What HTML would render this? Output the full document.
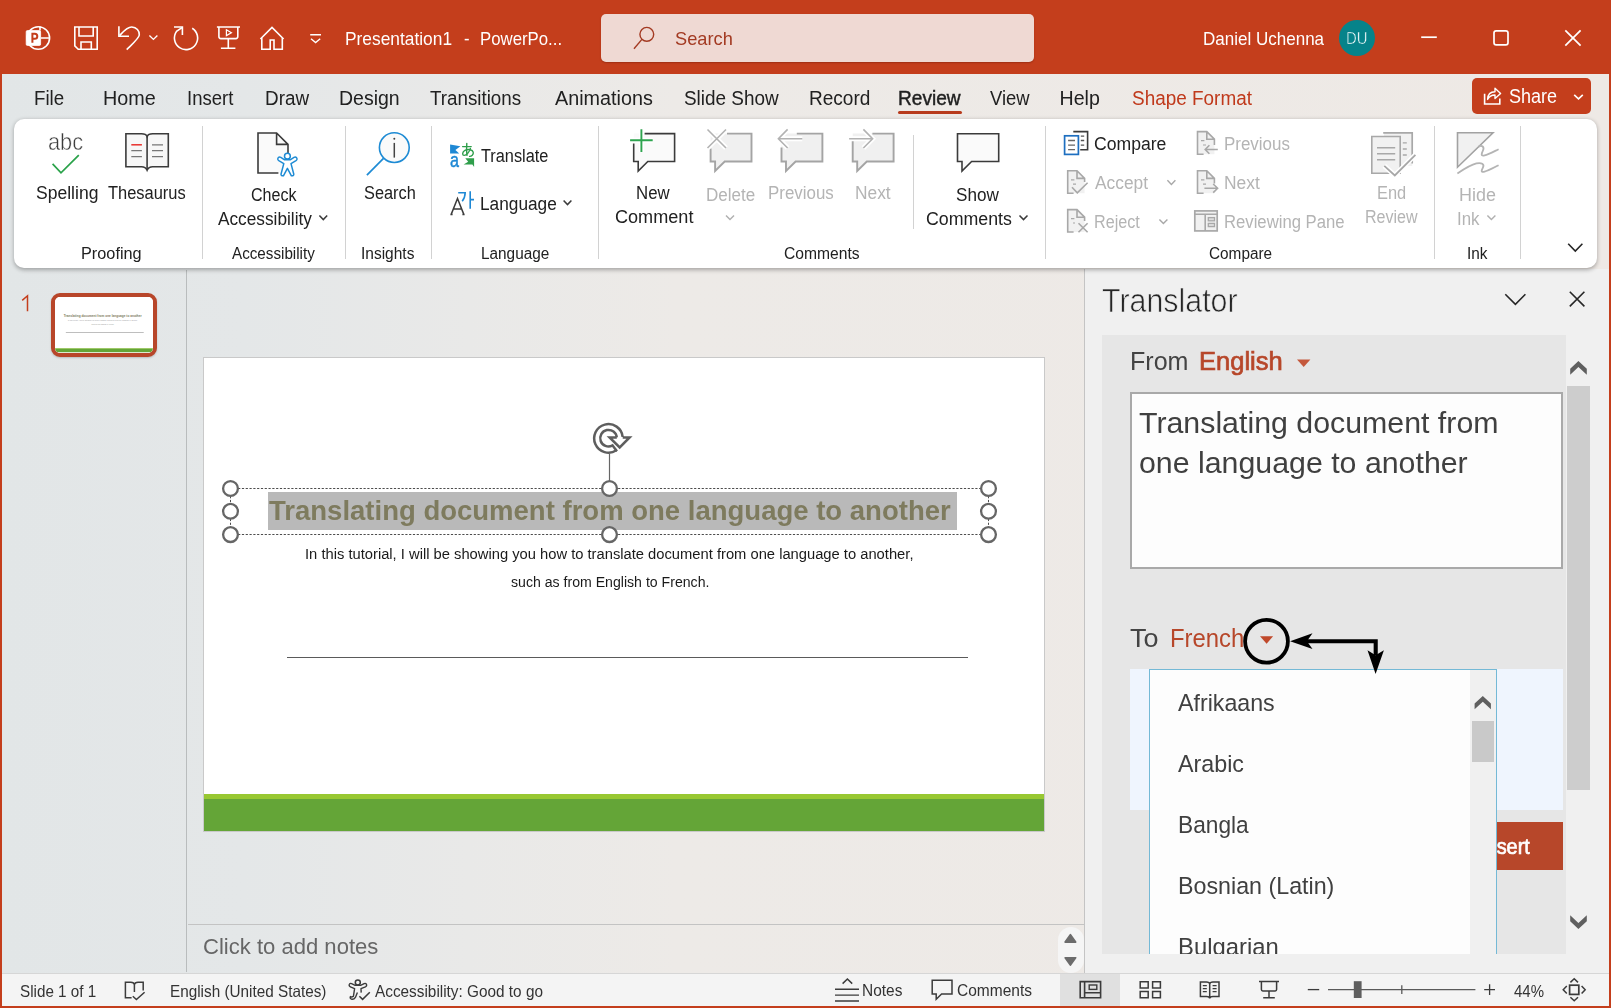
<!DOCTYPE html>
<html lang="en"><head><meta charset="utf-8"><title>Presentation1 - PowerPoint</title>
<style>
html,body{margin:0;padding:0;}
body{width:1611px;height:1008px;overflow:hidden;position:relative;background:#c43e1c;font-family:"Liberation Sans",sans-serif;}
.a{position:absolute;box-sizing:border-box;}
.t{position:absolute;white-space:nowrap;line-height:1;transform-origin:0 0;font-family:"Liberation Sans",sans-serif;}
#gfx{position:absolute;left:0;top:0;width:1611px;height:1008px;}
#app{left:2px;top:74px;width:1607px;height:932px;background:linear-gradient(90deg,#e2e6e7 0%,#e4e7e8 15%,#e9e9e8 29%,#edeae7 42%,#eee9e5 100%);}
#ribbon{left:14px;top:119px;width:1583px;height:149px;background:#fff;border-radius:10px;box-shadow:0 1.5px 4px rgba(0,0,0,.30);}
#search{left:601px;top:14px;width:433px;height:48px;background:#efd9d3;border-radius:5px;box-shadow:0 1px 1.5px rgba(90,20,0,.35);}
#share{left:1472px;top:78px;width:119px;height:36px;background:#c43e1c;border-radius:5px;}
#avatar{left:1339px;top:19.7px;width:36.2px;height:36.2px;border-radius:50%;background:#06838a;}
#revline{left:898px;top:111px;width:64px;height:3px;border-radius:2px;background:#b83b1d;}
.vsep{width:1px;background:#d2d2d2;top:126px;height:133px;}
#thumbsep{left:186px;top:270px;width:1px;height:702px;background:#b9bcbd;}
#thumb{left:51px;top:293px;width:106px;height:64px;border:4px solid #b8462a;box-shadow:0 1px 2px rgba(0,0,0,.18);border-radius:9px;background:#fff;overflow:hidden;}
#slide{left:203px;top:357px;width:842px;height:475px;background:#fff;border:1px solid #c9c9c9;}
#green1{left:204px;top:794px;width:840px;height:5px;background:#98c832;}
#green2{left:204px;top:799px;width:840px;height:32px;background:#64a537;}
#hl{left:268px;top:492px;width:689px;height:38px;background:#b9b9b9;}
#sline{left:287px;top:657px;width:681px;height:1px;background:#5a5a5a;}
#notesline{left:188px;top:924px;width:896px;height:1px;background:#c3c3c3;}
#notescroll{left:1058px;top:927px;width:26px;height:46px;border-radius:13px;background:#f5f5f5;}
#pane{left:1084px;top:269px;width:525px;height:704px;background:#f0f0f0;border-left:1px solid #c4c4c4;}
#pinner{left:1102px;top:335px;width:464px;height:619px;background:#e6e6e6;}
#ptrack{left:1567px;top:386px;width:23px;height:404px;background:#cdcdcd;}
#ptext{left:1130px;top:392px;width:433px;height:177px;background:#fdfdfd;border:2px solid #a9a9a9;}
#pblue{left:1130px;top:669px;width:433px;height:141px;background:#eff5fe;}
#pins{left:1400px;top:822px;width:163px;height:48px;background:#b7472a;}
#ddl{left:1149px;top:669px;width:348px;height:285px;background:#fdfdfd;border:1px solid #74b9d6;border-bottom:none;}
#ddtrack{left:1470px;top:670px;width:26px;height:284px;background:#f0f0f0;}
#ddthumb{left:1472px;top:721px;width:22px;height:41px;background:#c9c9c9;}
#status{left:2px;top:973px;width:1607px;height:33px;background:#f4f4f4;border-top:1px solid #d6d6d6;}
#viewsel{left:1060px;top:974px;width:60px;height:32px;background:#e0e0e0;}

#txt{position:absolute;left:0;top:0;width:1611px;height:1008px;will-change:opacity;opacity:.999;}
#mini{position:absolute;left:55px;top:297px;width:98px;height:56px;overflow:hidden;border-radius:5px;background:#fff;}
#mini-in{position:absolute;left:-22.4px;top:-39.25px;width:1200px;height:900px;transform:scale(0.1144,0.1134);transform-origin:0 0;}
#mini-in .t:nth-child(n+2){opacity:.5;}

</style></head>
<body>
<div class="a" id="app"></div>
<div class="a" id="search"></div>
<div class="a" id="avatar"></div>
<div class="a" id="share"></div>
<div class="a" id="revline"></div>
<div class="a" id="thumbsep"></div>
<div class="a" id="thumb"></div><div id="mini"><div id="mini-in"><span class="t" style="left:268.8px;top:497.4px;font-size:28px;color:#7e7b5e;font-weight:700;transform:scaleX(0.9825);">Translating document from one language to another</span><span class="t" style="left:305.2px;top:546.6px;font-size:14px;color:#1a1a1a;transform:scaleX(1.0523);">In this tutorial, I will be showing you how to translate document from one language to another,</span><span class="t" style="left:510.5px;top:575.4px;font-size:14px;color:#1a1a1a;transform:scaleX(1.0078);">such as from English to French.</span><div class="a" style="left:287px;top:655px;width:681px;height:4px;background:#707070"></div><div class="a" style="left:180px;top:794px;width:890px;height:5px;background:#98c832"></div><div class="a" style="left:180px;top:799px;width:890px;height:32px;background:#64a537"></div></div></div>
<div class="a" id="slide"></div>
<div class="a" id="green1"></div>
<div class="a" id="green2"></div>
<div class="a" id="hl"></div>
<div class="a" id="sline"></div>
<div class="a" id="notesline"></div>
<div class="a" id="notescroll"></div>
<div class="a" id="pane"></div>
<div class="a" id="pinner"></div>
<div class="a" id="ptrack"></div>
<div class="a" id="ptext"></div>
<div class="a" id="pblue"></div>
<div class="a" id="pins"></div>
<div class="a" id="ddl"></div>
<div class="a" id="ddtrack"></div>
<div class="a" id="ddthumb"></div>
<div class="a" id="ribbon"></div>
<div class="a vsep" style="left:202px"></div>
<div class="a vsep" style="left:345px"></div>
<div class="a vsep" style="left:431px"></div>
<div class="a vsep" style="left:598px"></div>
<div class="a vsep" style="left:913px;top:135px;height:94px"></div>
<div class="a vsep" style="left:1045px"></div>
<div class="a vsep" style="left:1434px"></div>
<div class="a vsep" style="left:1520px"></div>
<div class="a" id="status"></div>
<div class="a" id="viewsel"></div>

<svg id="gfx" viewBox="0 0 1611 1008" width="1611" height="1008" fill="none" stroke-linecap="butt" stroke-linejoin="miter">
<!--TITLEBAR-->
<g stroke="#fff" stroke-width="1.6">
<!-- ppt logo -->
<circle cx="38.3" cy="38" r="11.3"/>
<path d="M40 26.6V30.6 M41 38H49.6"/>
<rect x="26.2" y="30.6" width="14.4" height="14.8" rx="1.2" fill="#fff" stroke="#fff" stroke-width="0.8"/>
<path d="M32.4 42.8V33.8H34.8a2.4 2.4 0 0 1 0 5H32.4" stroke="#c43e1c" stroke-width="2"/>
<!-- save -->
<path d="M74.8 27H97.2V49.3H78.2L74.8 45.9Z"/>
<path d="M79 27V36H93.2V27 M81 49.3V42H91.3V49.3"/>
<!-- undo -->
<path d="M118.9 26.2V36.3H129"/>
<path d="M119.6 35.6C123 32 127 26.8 131.8 27 C136.5 27.2 139.6 30.8 139.3 35 C139 38 136 40.5 126.7 49.6"/>
<path d="M149.4 35.6L153.4 39.4L157.4 35.6" stroke-width="1.4"/>
<!-- redo -->
<path d="M174 27H182.4V35"/>
<path d="M182 27.6L176.5 31.4A11.6 11.6 0 1 0 192.2 28.2"/>
<!-- present -->
<path d="M216.9 27H240 M218.9 27V36.6a2 2 0 0 0 2 2H235.8a2 2 0 0 0 2-2V27 M228.3 38.6V48.2 M220.9 48.2H235.4"/>
<path d="M226.4 29.8L231.4 32.7L226.4 35.6Z" stroke-width="1.2"/>
<!-- home -->
<path d="M260.4 39L272 27.4L283.6 39 M261.8 38V49.2H270.2V40H274V49.2H282.3V38"/>
<!-- customize -->
<path d="M310.2 34.8H321 M311 38.8L315.6 42.6L320.2 38.8" stroke-width="1.4"/>
<!-- window buttons -->
<path d="M1421.2 37.2H1436.8" stroke-width="1.7"/>
<rect x="1494" y="30.9" width="14" height="14" rx="2.2" stroke-width="1.7"/>
<path d="M1565.3 30.4L1580.6 45.7 M1580.6 30.4L1565.3 45.7" stroke-width="1.7"/>
<!-- share icon -->
<path d="M1484.6 93.8V104H1499.8V98.6"/>
<path d="M1487.6 99.4C1487.8 94.6 1490.6 91.8 1495 91.8V88.2L1500.6 93.4L1495 98.6V95C1491.6 95 1489.2 96.4 1487.6 99.4Z" stroke-width="1.4" stroke-linejoin="round"/>
<path d="M1574.2 94.8L1578.5 98.8L1582.8 94.8" stroke-width="1.6"/>
</g>
<!-- search glass -->
<g stroke="#a33a22" stroke-width="1.4"><circle cx="646.8" cy="34.3" r="6.9"/><path d="M641.9 39.4L634 48.7"/></g>

<!--RIBBON-->
<g stroke-width="1.6">
<!-- spelling check -->
<path d="M52.6 163.8L61 172.8L78.8 155.2" stroke="#2aa24a" stroke-width="1.7"/>
<!-- thesaurus book -->
<path d="M125.9 133.8H141.5Q146 133.8 147.1 136.6Q148.2 133.8 152.7 133.8H168.3V166.8H152.7Q148.6 166.8 147.1 170.2Q145.6 166.8 141.5 166.8H125.9Z" fill="#f7f7f7" stroke="#3b3b3b"/>
<path d="M147.1 136.6V170" stroke="#3b3b3b"/>
<path d="M131.3 144.8H141.9" stroke="#e8302c" stroke-width="1.5"/>
<path d="M131.3 150.7H141.9 M131.3 156.6H141.9 M152 144.8H163 M152 150.7H163 M152 156.6H163" stroke="#777" stroke-width="1.3"/>
<!-- check accessibility -->
<path d="M258 133H276.6L288 144.4V173H258Z" fill="#fafafa" stroke="none"/>
<path d="M288 153V144.4L276.6 133H258V173H278.4 M276.6 133V144.4H288" stroke="#3b3b3b"/>
<g stroke="#1e8bd4" stroke-width="1.5" fill="#fff" stroke-linejoin="round">
<path d="M278.3 157.6Q277 159.4 278.8 160.6L283.8 163.6L281 174.2Q281.2 176.2 283.4 175.8L287.4 168.4L291.4 175.8Q293.6 176.2 293.8 174.2L291 163.6L296 160.6Q297.8 159.4 296.5 157.6Q295.4 156.6 294 157.4L290.2 159.8H284.6L280.8 157.4Q279.4 156.6 278.3 157.6Z"/>
<circle cx="287.4" cy="156.2" r="2.9"/>
</g>
<path d="M319.4 215.4L323.3 219.6L327.2 215.4" stroke="#3b3b3b" stroke-width="1.5"/>
<!-- insights search -->
<circle cx="394.3" cy="147.6" r="14.9" stroke="#1e8bd4" fill="#fafafa"/>
<path d="M383.5 158.4L366.9 175.2" stroke="#1e8bd4" stroke-width="1.7"/>
<path d="M394.3 142.9V157.6" stroke="#444" stroke-width="1.5"/>
<circle cx="394.3" cy="138.8" r="1" fill="#444" stroke="none"/>
<!-- translate -->
<path d="M450.1 144.6L460.4 146.3L455.4 150L459.2 153.4H450.1Z" fill="#1e88d4" stroke="none"/>
<path d="M465.3 158.2H474.1V167L472.4 164.6L463.6 164.4L468.2 161.8Z" fill="#2f9e4b" stroke="none"/>
<g stroke="#2f9e4b" stroke-width="1.4" stroke-linecap="round">
<path d="M462.6 146.6H471.2 M466.8 143.4Q466.2 150 467 155.4"/>
<path d="M470.4 148.4C469.4 152 466.4 155.6 464 155.4C462 155 462.2 151.8 465 150.4C468.2 148.8 472.6 149.6 473.2 152.2C473.8 154.8 471.4 156.2 469.6 156.4"/>
</g>
<!-- language -->
<path d="M451.2 214.4L457.5 198.5L463.8 214.4 M453.4 209H461.6 M450.4 214.4H452.6 M462.4 214.4H464.6" stroke="#3b3b3b" stroke-width="1.5"/>
<path d="M458.2 192.8H465.2Q465 198 462.2 201.2 M470.2 191.2V208.8 M470.2 199.6H474" stroke="#1e88d4" stroke-width="1.6"/>
<path d="M563.6 200.4L567.5 204.6L571.4 200.4" stroke="#3b3b3b" stroke-width="1.5"/>
<!-- new comment -->
<path d="M633.7 133.6H674.6V161.5H647.8L638.2 171V161.5H633.7Z" fill="#fafafa" stroke="none"/>
<path d="M644.6 133.6H674.6V161.5H647.8L638.2 171V161.5H633.7V143.6" stroke="#3b3b3b"/>
<path d="M630.1 140.3H652.7 M641.4 129.3V151.9" stroke="#fff" stroke-width="5"/>
<path d="M630.1 140.3H652.7 M641.4 129.3V151.9" stroke="#2ea44f" stroke-width="1.9"/>
<!-- delete comment -->
<path d="M710.6 133.6H751.5V161.5H724.7L715.1 171V161.5H710.6Z" fill="#f0f0f0" stroke="none"/>
<path d="M727 133.6H751.5V161.5H724.7L715.1 171V161.5H710.6V148.6" stroke="#a4a4a4" stroke-width="1.9"/>
<path d="M707.5 129.5L726 148 M726 129.5L707.5 148" stroke="#fff" stroke-width="5"/>
<path d="M707.5 129.5L726 148 M726 129.5L707.5 148" stroke="#b2b2b2" stroke-width="1.6"/>
<path d="M726 215.4L730 219.6L734 215.4" stroke="#b0b0b0" stroke-width="1.4"/>
<!-- previous comment -->
<path d="M781.5 133.6H822.4V161.5H795.6L786 171V161.5H781.5Z" fill="#f0f0f0" stroke="none"/>
<path d="M796.8 133.6H822.4V161.5H795.6L786 171V161.5H781.5V147.4" stroke="#a4a4a4" stroke-width="1.9"/>
<path d="M802.3 138.7H778.8 M787.6 129.4L778.4 138.7L787.6 148" stroke="#fff" stroke-width="5"/>
<path d="M802.3 138.7H778.8 M787.6 129.4L778.4 138.7L787.6 148" stroke="#b2b2b2" stroke-width="1.6"/>
<!-- next comment -->
<path d="M852.7 133.6H893.6V161.5H866.8L857.2 171V161.5H852.7Z" fill="#f0f0f0" stroke="none"/>
<path d="M872.4 133.6H893.6V161.5H866.8L857.2 171V161.5H852.7V141" stroke="#a4a4a4" stroke-width="1.9"/>
<path d="M849.1 138.7H872.4 M863.4 129.4L872.6 138.7L863.4 148" stroke="#fff" stroke-width="5"/>
<path d="M849.1 138.7H872.4 M863.4 129.4L872.6 138.7L863.4 148" stroke="#b2b2b2" stroke-width="1.6"/>
<!-- show comments -->
<path d="M957.5 133.8H998.7V161.5H971.6L962 171V161.5H957.5Z" fill="#fafafa" stroke="#3b3b3b"/>
<path d="M1019.5 215.4L1023.5 219.6L1027.5 215.4" stroke="#3b3b3b" stroke-width="1.5"/>
<!-- compare -->
<path d="M1073.3 131.6H1087.6V149.8H1080.2" stroke="#3b3b3b"/>
<path d="M1080.8 136.1H1084.2 M1080.8 140.5H1084.2 M1080.8 145.1H1084.2" stroke="#555" stroke-width="1.3"/>
<rect x="1064.6" y="135.8" width="13.8" height="18.6" fill="#fff" stroke="#1e6fc0" stroke-width="1.7"/>
<path d="M1068.1 140.5H1075 M1068.1 145.1H1075 M1068.1 149.6H1075" stroke="#666" stroke-width="1.3"/>
<!-- accept -->
<g stroke="#a8a8a8">
<path d="M1067.7 170.8H1077L1084.6 178.4V193.2H1067.7Z" fill="#f1f1f1" stroke="none"/>
<path d="M1084.6 182V178.4L1077 170.8H1067.7V193.2H1073.6 M1077 170.8V178.4H1084.6"/>
<path d="M1071 179.8H1074.4 M1073 184.2H1076" stroke-width="1.2"/>
<path d="M1072 187.3L1077.3 192.8L1087.6 182.7"/>
<path d="M1167.4 180.3L1171.4 184.5L1175.4 180.3" stroke-width="1.4"/>
<!-- reject -->
<path d="M1067.7 209.6H1077L1084.6 217.2V232H1067.7Z" fill="#f1f1f1" stroke="none"/>
<path d="M1084.6 221V217.2L1077 209.6H1067.7V232H1073.6 M1077 209.6V217.2H1084.6"/>
<path d="M1071 218.6H1074.4 M1073 223H1075" stroke-width="1.2"/>
<path d="M1078.5 223.2L1087.6 232.3 M1087.6 223.2L1078.5 232.3"/>
<path d="M1159.4 219.4L1163.4 223.6L1167.4 219.4" stroke-width="1.4"/>
<!-- previous change -->
<path d="M1197.5 131.6H1206.8L1214.4 139.2V154.2H1197.5Z" fill="#f1f1f1" stroke="none"/>
<path d="M1214.4 145V139.2L1206.8 131.6H1197.5V154.2H1203.6 M1206.8 131.6V139.2H1214.4"/>
<path d="M1201 140.6H1204.4 M1203 145H1206" stroke-width="1.2"/>
<path d="M1217.8 149.5H1205.4 M1209.4 145.3L1205.2 149.5L1209.4 153.7"/>
<!-- next change -->
<path d="M1197.5 170.8H1206.8L1214.4 178.4V193.2H1197.5Z" fill="#f1f1f1" stroke="none"/>
<path d="M1214.4 183.6V178.4L1206.8 170.8H1197.5V193.2H1203.6 M1206.8 170.8V178.4H1214.4"/>
<path d="M1201 179.8H1204.4 M1203 184.2H1206" stroke-width="1.2"/>
<path d="M1204.4 188.3H1217.4 M1213.2 184L1217.6 188.3L1213.2 192.6"/>
<!-- reviewing pane -->
<rect x="1194.8" y="210.9" width="22.4" height="20" fill="#f1f1f1" stroke-width="1.7"/>
<path d="M1194.8 214.2H1217.2 M1205.2 214.2V230.9"/>
<rect x="1208.3" y="217.6" width="6.2" height="3.2" fill="#ddd" stroke-width="1.3"/>
<rect x="1208.3" y="223.4" width="6.2" height="3.2" fill="#ddd" stroke-width="1.3"/>
<!-- end review -->
<path d="M1384 132.8H1412.2V166H1384Z" fill="#f1f1f1" stroke="none"/>
<path d="M1383.2 132.8H1412.2V163.6" fill="none" stroke-width="1.7"/>
<path d="M1371.8 136.5H1400.2V173.2H1371.8Z" fill="#f1f1f1"/>
<path d="M1377 147.7H1395.2 M1377 153.7H1395.2 M1377 159.8H1395.2 M1402.8 142.9H1406.8 M1402.8 149H1406.8 M1402.8 155H1406.8" stroke-width="1.4"/>
<path d="M1384.3 165.8L1394.8 175.4L1415.4 154.8" stroke="#fff" stroke-width="5"/>
<path d="M1384.3 165.8L1394.8 175.4L1415.4 154.8" stroke-width="1.8"/>
<!-- hide ink -->
<path d="M1457.5 132.8H1493L1457.5 167.2Z" fill="#f1f1f1" stroke="#a2a2a2" stroke-width="1.6"/>
<path d="M1478.6 146.6C1482 144.6 1484.6 147 1483 150.4C1481.4 153.8 1480.6 156.4 1484.6 155.4C1488.6 154.4 1494 151.4 1498.6 149.2" stroke="#b4b4b4" stroke-width="1.8"/>
<path d="M1457.4 173.4C1464 169 1470.4 164.8 1476.4 163.4C1481.6 162.2 1484.6 164.2 1483 167.4C1481.4 170.6 1480.6 172.6 1484.6 171.6C1488.6 170.6 1494 167.4 1498.6 165.2" stroke="#b4b4b4" stroke-width="1.8"/>
<path d="M1487.4 215.4L1491.4 219.6L1495.4 215.4" stroke-width="1.4" stroke="#b0b0b0"/>
</g>
<!-- collapse ribbon -->
<path d="M1568.2 243.8L1575.3 251L1582.4 243.8" stroke="#262626" stroke-width="1.6"/>
</g>

<!--SLIDE-->
<path d="M22.2 300.4L27.5 295.8V311.2" stroke="#c43e1c" stroke-width="1.5"/>
<!-- selection -->
<g stroke="#4d4d4d" stroke-width="1">
<path d="M230.5 488.5H988.5 M230.5 534.5H988.5" stroke-dasharray="2.2 1.6"/>
<path d="M230.5 488.5V534.5 M988.5 488.5V534.5" stroke-dasharray="2.2 1.6"/>
<path d="M609.5 453.5V481" stroke="#666" stroke-width="1.2"/>
</g>
<g fill="#fff" stroke="#666" stroke-width="2.3">
<circle cx="230.5" cy="488.5" r="7.4"/><circle cx="230.5" cy="511.3" r="7.4"/><circle cx="230.5" cy="534.6" r="7.4"/>
<circle cx="609.5" cy="488.5" r="7.4"/><circle cx="609.5" cy="534.6" r="7.4"/>
<circle cx="988.5" cy="488.5" r="7.4"/><circle cx="988.5" cy="511.3" r="7.4"/><circle cx="988.5" cy="534.6" r="7.4"/>
</g>
<!-- rotate handle -->
<g stroke="#5e5e5e" stroke-width="2.5" stroke-linejoin="miter">
<path d="M622.7 437A14.3 14.3 0 1 0 616.4 450.3"/>
<path d="M616.8 437.6A8.3 8.3 0 1 0 612.3 445.6"/>
<path d="M611.8 444.6L617 451.2"/>
<path d="M616.8 437.4H609.6L619.7 447.4L629.6 437.4H622.7" fill="#fff"/>
</g>

<!--PANE-->
<g>
<path d="M1505.3 294.3L1515.4 304.4L1525.4 294.3" stroke="#262626" stroke-width="1.6"/>
<path d="M1569.8 291.8L1584.4 306.4 M1584.4 291.8L1569.8 306.4" stroke="#262626" stroke-width="1.6"/>
<path d="M1578.4 361L1586.8 368.7V374.7L1578.4 366.9L1570.2 374.7V368.7Z" fill="#5f5f5f"/>
<path d="M1578.4 929L1586.8 921.3V915.3L1578.4 923.1L1570.2 915.3V921.3Z" fill="#5f5f5f"/>
<path d="M1482.8 696L1490.9 703.4V709.2L1482.8 701.7L1474.6 709.2V703.4Z" fill="#5f5f5f"/>
<path d="M1297 359.4H1310.4L1303.7 367Z" fill="#c4583c"/>
<path d="M1260 636.3H1273.1L1266.6 643.7Z" fill="#c0492b"/>
<circle cx="1266.5" cy="641.2" r="21.4" stroke="#000" stroke-width="3.8"/>
<path d="M1306 641.2H1375.7V655" stroke="#000" stroke-width="4.1"/>
<path d="M1290.1 641.2L1312.5 633.3L1306.9 641.2L1312.5 649Z" fill="#000"/>
<path d="M1375.6 673.9L1367.5 650.3L1375.6 655.2L1383.9 650.3Z" fill="#000"/>
</g>

<!--STATUS-->
<g stroke="#3b3b3b" stroke-width="1.5">
<!-- spell book -->
<path d="M131.6 997.8H125.4V982.2H130.8Q134 982.2 134.4 984.6Q134.8 982.2 138 982.2H143.2V990.6 M134.4 984.6V992"/>
<path d="M132.8 996.2L136.4 999.6L144.6 992.2"/>
<!-- accessibility -->
<circle cx="357.8" cy="982.6" r="2.5"/>
<path d="M349.4 984.2Q348.6 986 350.4 986.8L354.6 988.6L353.4 996.4Q351.4 997.4 350.4 996.6Q349.6 998.6 351.6 999.2Q354 999.6 355.4 997.4L357.4 992.6 M361.2 992.6L361 988.6L365.4 986.8Q367.2 986 366.4 984.2Q365.6 983 364.2 983.6L360.6 985.4H355.2L351.6 983.6Q350.2 983 349.4 984.2" stroke-width="1.4" stroke-linejoin="round"/>
<path d="M359.4 996.2L362.6 999.4L369.8 992.2"/>
<!-- notes -->
<path d="M835 989.2H859 M835 995.1H859 M835 1001H859" stroke-width="1.4"/>
<path d="M842.6 983.6L847.4 979L852.2 983.6"/>
<!-- comments -->
<path d="M932.2 980.2H952V994H941.6L936.2 999.2V994H932.2Z"/>
<!-- normal view -->
<path d="M1080.2 981.6H1100.6V997.8H1080.2Z M1084.6 981.6V997.8 M1084.6 992.8H1100.6" stroke-width="1.6"/>
<rect x="1089.2" y="985" width="7.6" height="4.4" stroke-width="1.4"/>
<!-- sorter -->
<path d="M1140.2 981.8H1148.2V988H1140.2Z M1152.6 981.8H1160.4V988H1152.6Z M1140.2 991.6H1148.2V997.8H1140.2Z M1152.6 991.6H1160.4V997.8H1152.6Z"/>
<!-- reading view -->
<path d="M1200.4 982H1206.4Q1209.4 982 1209.7 984Q1210 982 1213 982H1219V996.6H1213Q1210 996.6 1209.7 998.4Q1209.4 996.6 1206.4 996.6H1200.4Z M1209.7 984V998"/>
<path d="M1202.8 985.6H1206.8 M1202.8 988.6H1206.8 M1202.8 991.6H1206.8 M1212.6 985.6H1216.6 M1212.6 988.6H1216.6 M1212.6 991.6H1216.6" stroke-width="1.1"/>
<!-- slideshow -->
<path d="M1259 981.6H1279 M1261.4 981.6V989.6Q1261.4 991 1262.8 991H1275.2Q1276.6 991 1276.6 989.6V981.6 M1269 991V997.8 M1263.2 997.8H1274.8"/>
<!-- zoom -->
<path d="M1307.8 989.6H1319.2" stroke-width="1.3"/>
<path d="M1328 989.6H1475.4" stroke="#5a5a5a" stroke-width="1.3"/>
<path d="M1401.8 985.2V994" stroke="#5a5a5a" stroke-width="1.3"/>
<rect x="1353.8" y="981.2" width="7.8" height="16.8" fill="#5f5f5f" stroke="none"/>
<path d="M1484.2 989.6H1495 M1489.6 984.2V995" stroke-width="1.3"/>
<!-- fit -->
<rect x="1569.6" y="985.2" width="9.2" height="9.2" stroke-width="1.7"/>
<path d="M1570.4 982.4L1574.2 978.8L1578 982.4 M1570.4 997.2L1574.2 1000.8L1578 997.2 M1566.8 986L1563.2 989.8L1566.8 993.6 M1581.6 986L1585.2 989.8L1581.6 993.6"/>
</g>
<!-- notes scroll -->
<path d="M1065.2 942L1070.4 934.8L1075.6 942Z M1065.2 957.8L1070.4 965L1075.6 957.8Z" fill="#6c6c6c" stroke="#6c6c6c" stroke-width="1.8" stroke-linejoin="round"/>

</svg>

<div id="txt">
<span class="t" style="left:344.6px;top:29.9px;font-size:18.1px;color:#ffffff;transform:scaleX(0.9585);">Presentation1</span>
<span class="t" style="left:464.0px;top:29.9px;font-size:18.1px;color:#ffffff;transform:scaleX(0.9167);">-</span>
<span class="t" style="left:479.7px;top:29.9px;font-size:18.1px;color:#ffffff;transform:scaleX(0.9275);">PowerPo...</span>
<span class="t" style="left:675.4px;top:29.5px;font-size:18.5px;color:#a33a22;transform:scaleX(0.9858);">Search</span>
<span class="t" style="left:1202.9px;top:29.9px;font-size:18.1px;color:#ffffff;transform:scaleX(0.9403);">Daniel Uchenna</span>
<span class="t" style="left:1346.4px;top:30.3px;font-size:16.2px;color:#fff;-webkit-text-stroke:0.45px #06838a;transform:scaleX(0.9175);">DU</span>
<span class="t" style="left:33.9px;top:88.9px;font-size:19.6px;color:#212121;transform:scaleX(0.9552);">File</span>
<span class="t" style="left:102.9px;top:88.9px;font-size:19.6px;color:#212121;transform:scaleX(1.0084);">Home</span>
<span class="t" style="left:187.1px;top:88.9px;font-size:19.6px;color:#212121;transform:scaleX(0.9452);">Insert</span>
<span class="t" style="left:264.7px;top:88.9px;font-size:19.6px;color:#212121;transform:scaleX(0.9633);">Draw</span>
<span class="t" style="left:338.6px;top:88.9px;font-size:19.6px;color:#212121;transform:scaleX(0.9950);">Design</span>
<span class="t" style="left:430.4px;top:88.9px;font-size:19.6px;color:#212121;transform:scaleX(0.9580);">Transitions</span>
<span class="t" style="left:554.5px;top:88.9px;font-size:19.6px;color:#212121;transform:scaleX(1.0090);">Animations</span>
<span class="t" style="left:684.3px;top:88.9px;font-size:19.6px;color:#212121;transform:scaleX(0.9659);">Slide Show</span>
<span class="t" style="left:808.6px;top:88.9px;font-size:19.6px;color:#212121;transform:scaleX(0.9712);">Record</span>
<span class="t" style="left:897.6px;top:88.9px;font-size:19.6px;color:#1f1f1f;-webkit-text-stroke:0.45px #1f1f1f;transform:scaleX(0.9736);">Review</span>
<span class="t" style="left:989.6px;top:88.9px;font-size:19.6px;color:#212121;transform:scaleX(0.9380);">View</span>
<span class="t" style="left:1059.5px;top:88.9px;font-size:19.6px;color:#212121;transform:scaleX(1.0000);">Help</span>
<span class="t" style="left:1131.7px;top:88.9px;font-size:19.6px;color:#c0391b;transform:scaleX(0.9662);">Shape Format</span>
<span class="t" style="left:1508.7px;top:86.7px;font-size:19.6px;color:#ffffff;transform:scaleX(0.9201);">Share</span>
<span class="t" style="left:47.8px;top:130.9px;font-size:23.4px;color:#3b3b3b;-webkit-text-stroke:0.5px #fff;transform:scaleX(0.9320);">abc</span>
<span class="t" style="left:35.6px;top:184.2px;font-size:18px;color:#212121;transform:scaleX(0.9741);">Spelling</span>
<span class="t" style="left:108.3px;top:184.2px;font-size:18px;color:#212121;transform:scaleX(0.9137);">Thesaurus</span>
<span class="t" style="left:80.9px;top:246.1px;font-size:15.8px;color:#212121;transform:scaleX(1.0306);">Proofing</span>
<span class="t" style="left:251.3px;top:185.8px;font-size:18px;color:#212121;transform:scaleX(0.8920);">Check</span>
<span class="t" style="left:218.4px;top:209.9px;font-size:18px;color:#212121;transform:scaleX(0.9579);">Accessibility</span>
<span class="t" style="left:232.4px;top:246.1px;font-size:15.8px;color:#212121;transform:scaleX(0.9625);">Accessibility</span>
<span class="t" style="left:363.6px;top:184.2px;font-size:18px;color:#212121;transform:scaleX(0.9068);">Search</span>
<span class="t" style="left:360.6px;top:246.1px;font-size:15.8px;color:#212121;transform:scaleX(0.9805);">Insights</span>
<span class="t" style="left:450.1px;top:149.3px;font-size:21px;color:#1e88d4;-webkit-text-stroke:0.5px #1e88d4;transform:scaleX(0.7667);">a</span>
<span class="t" style="left:480.5px;top:146.9px;font-size:18px;color:#212121;transform:scaleX(0.9065);">Translate</span>
<span class="t" style="left:480.3px;top:194.9px;font-size:18px;color:#212121;transform:scaleX(0.9586);">Language</span>
<span class="t" style="left:480.6px;top:246.1px;font-size:15.8px;color:#212121;transform:scaleX(0.9712);">Language</span>
<span class="t" style="left:636.3px;top:183.9px;font-size:18px;color:#212121;transform:scaleX(0.9331);">New</span>
<span class="t" style="left:614.6px;top:208.0px;font-size:18px;color:#212121;transform:scaleX(1.0049);">Comment</span>
<span class="t" style="left:706.4px;top:185.8px;font-size:18px;color:#b4b4b4;transform:scaleX(0.9447);">Delete</span>
<span class="t" style="left:768.2px;top:183.9px;font-size:18px;color:#b4b4b4;transform:scaleX(0.9387);">Previous</span>
<span class="t" style="left:855.2px;top:183.9px;font-size:18px;color:#b4b4b4;transform:scaleX(0.9636);">Next</span>
<span class="t" style="left:956.4px;top:185.8px;font-size:18px;color:#212121;transform:scaleX(0.9516);">Show</span>
<span class="t" style="left:926.3px;top:209.9px;font-size:18px;color:#212121;transform:scaleX(0.9871);">Comments</span>
<span class="t" style="left:784.0px;top:246.1px;font-size:15.8px;color:#212121;transform:scaleX(0.9899);">Comments</span>
<span class="t" style="left:1094.4px;top:134.9px;font-size:18px;color:#212121;transform:scaleX(0.9781);">Compare</span>
<span class="t" style="left:1094.8px;top:174.1px;font-size:18px;color:#b4b4b4;transform:scaleX(0.9632);">Accept</span>
<span class="t" style="left:1094.2px;top:213.0px;font-size:18px;color:#b4b4b4;transform:scaleX(0.8976);">Reject</span>
<span class="t" style="left:1224.2px;top:134.9px;font-size:18px;color:#b4b4b4;transform:scaleX(0.9416);">Previous</span>
<span class="t" style="left:1224.1px;top:174.1px;font-size:18px;color:#b4b4b4;transform:scaleX(0.9664);">Next</span>
<span class="t" style="left:1224.2px;top:213.0px;font-size:18px;color:#b4b4b4;transform:scaleX(0.9266);">Reviewing Pane</span>
<span class="t" style="left:1377.4px;top:183.9px;font-size:18px;color:#b4b4b4;transform:scaleX(0.9128);">End</span>
<span class="t" style="left:1365.3px;top:208.0px;font-size:18px;color:#b4b4b4;transform:scaleX(0.8912);">Review</span>
<span class="t" style="left:1208.6px;top:246.1px;font-size:15.8px;color:#212121;transform:scaleX(0.9711);">Compare</span>
<span class="t" style="left:1459.0px;top:185.9px;font-size:18px;color:#b4b4b4;transform:scaleX(0.9970);">Hide</span>
<span class="t" style="left:1457.0px;top:210.0px;font-size:18px;color:#b4b4b4;transform:scaleX(0.9370);">Ink</span>
<span class="t" style="left:1467.0px;top:246.1px;font-size:15.8px;color:#212121;transform:scaleX(0.9715);">Ink</span>
<span class="t" style="left:268.8px;top:497.4px;font-size:28px;color:#7e7b5e;font-weight:700;transform:scaleX(0.9825);">Translating document from one language to another</span>
<span class="t" style="left:305.2px;top:546.6px;font-size:14px;color:#1a1a1a;transform:scaleX(1.0523);">In this tutorial, I will be showing you how to translate document from one language to another,</span>
<span class="t" style="left:510.5px;top:575.4px;font-size:14px;color:#1a1a1a;transform:scaleX(1.0078);">such as from English to French.</span>
<span class="t" style="left:202.7px;top:936.1px;font-size:22.5px;color:#666;transform:scaleX(0.9803);">Click to add notes</span>
<span class="t" style="left:1101.9px;top:284.4px;font-size:33px;color:#262626;-webkit-text-stroke:0.7px #f0f0f0;transform:scaleX(0.9204);">Translator</span>
<span class="t" style="left:1129.6px;top:348.9px;font-size:25.2px;color:#444;transform:scaleX(0.9950);">From</span>
<span class="t" style="left:1199.0px;top:348.9px;font-size:25.2px;color:#b7472a;-webkit-text-stroke:0.7px #b7472a;transform:scaleX(1.0125);">English</span>
<span class="t" style="left:1139.4px;top:408.0px;font-size:30px;color:#404040;transform:scaleX(1.0107);">Translating document from</span>
<span class="t" style="left:1138.8px;top:447.9px;font-size:30px;color:#404040;transform:scaleX(1.0105);">one language to another</span>
<span class="t" style="left:1130.2px;top:626.0px;font-size:25.2px;color:#444;transform:scaleX(1.0706);">To</span>
<span class="t" style="left:1169.6px;top:626.0px;font-size:25.2px;color:#b7472a;transform:scaleX(0.9485);">French</span>
<span class="t" style="left:1480.1px;top:836.5px;font-size:21.5px;color:#ffffff;-webkit-text-stroke:0.7px #fff;clip-path:inset(0 0 0 32.6%);transform:scaleX(0.9281);">Insert</span>
<span class="t" style="left:1178.3px;top:691.8px;font-size:23.7px;color:#404040;transform:scaleX(0.9796);">Afrikaans</span>
<span class="t" style="left:1178.3px;top:752.8px;font-size:23.7px;color:#404040;transform:scaleX(0.9822);">Arabic</span>
<span class="t" style="left:1177.5px;top:813.8px;font-size:23.7px;color:#404040;transform:scaleX(0.9581);">Bangla</span>
<span class="t" style="left:1177.5px;top:874.8px;font-size:23.7px;color:#404040;transform:scaleX(0.9814);">Bosnian (Latin)</span>
<span class="t" style="left:1177.5px;top:935.8px;font-size:23.7px;color:#404040;clip-path:inset(0 0 5.4px 0);transform:scaleX(1.0060);">Bulgarian</span>
<span class="t" style="left:19.8px;top:983.0px;font-size:16.5px;color:#333;transform:scaleX(0.9226);">Slide 1 of 1</span>
<span class="t" style="left:170.4px;top:983.0px;font-size:16.5px;color:#333;transform:scaleX(0.9267);">English (United States)</span>
<span class="t" style="left:375.4px;top:983.0px;font-size:16.5px;color:#333;transform:scaleX(0.9297);">Accessibility: Good to go</span>
<span class="t" style="left:861.9px;top:982.3px;font-size:16.5px;color:#333;transform:scaleX(0.9366);">Notes</span>
<span class="t" style="left:957.4px;top:982.3px;font-size:16.5px;color:#333;transform:scaleX(0.9407);">Comments</span>
<span class="t" style="left:1514.2px;top:983.0px;font-size:16.5px;color:#333;transform:scaleX(0.9085);">44%</span>
</div>
</body></html>
